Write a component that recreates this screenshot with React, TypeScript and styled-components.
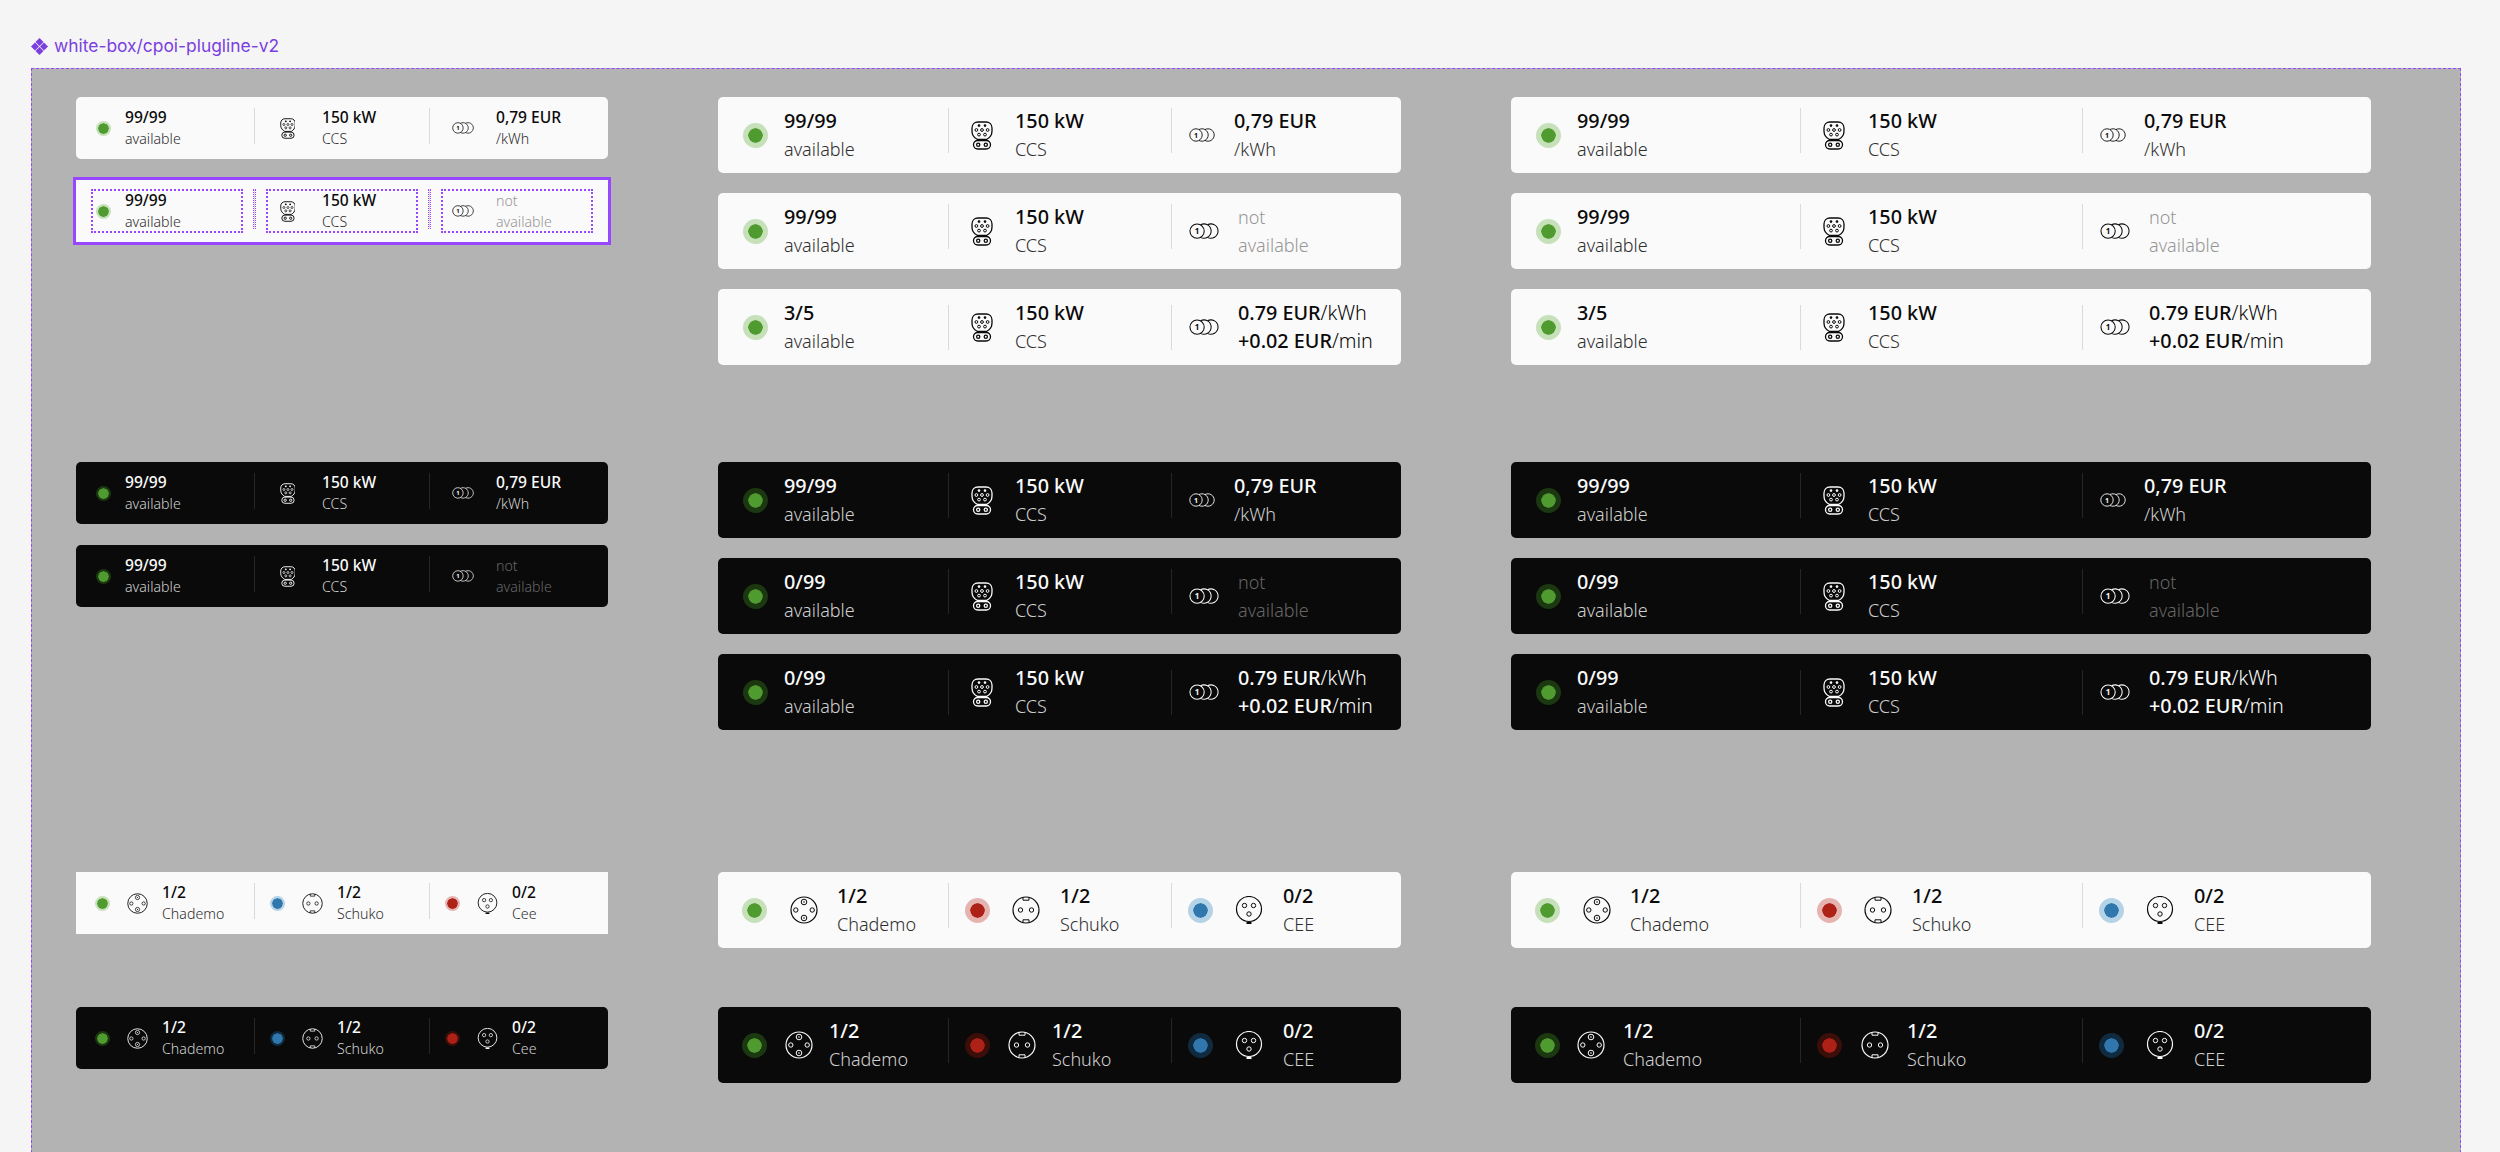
import React from "react";
import styled, { createGlobalStyle } from "styled-components";

const Global = createGlobalStyle`
  html, body { margin: 0; padding: 0; background: #f5f5f5; width: 2500px; height: 1152px; overflow: hidden; }
  body { font-family: "Noto Sans", "Open Sans", sans-serif; }
`;

type Size = "sm" | "md" | "xl";
type Tone = "green" | "red" | "blue";

const Page = styled.div`
  width: 2500px;
  height: 1152px;
  overflow: hidden;
  padding: 34px 0 0 31px;
  box-sizing: border-box;
`;
const FrameLabel = styled.div`
  display: flex;
  align-items: center;
  gap: 6px;
  height: 24px;
  margin-bottom: 10px;
  font: 400 17.4px/24px Inter, sans-serif;
  color: #7b3fe0;
`;
const Frame = styled.div`
  width: 2430px;
  height: 1100px;
  box-sizing: border-box;
  border: 1px dashed #9747ff;
  background: #b3b3b3;
  padding: 28px 0 0 44px;
  display: grid;
  grid-template-columns: 532px 683px 860px;
  column-gap: 110px;
  align-content: start;
`;
const Column = styled.div`
  display: flex;
  flex-direction: column;
`;
const Section = styled.div<{ $h: number; $gap: number }>`
  height: ${(p) => p.$h}px;
  display: flex;
  flex-direction: column;
  gap: ${(p) => p.$gap}px;
`;

const gridBySize: Record<Size, string> = {
  sm: "150px 1px 150px 1px 150px",
  md: "202px 1px 198px 1px 1fr",
  xl: "261px 1px 257px 1px 1fr",
};
const Row = styled.div<{ $size: Size; $dark?: boolean; $square?: boolean; $selected?: boolean }>`
  position: relative;
  display: grid;
  grid-template-columns: ${(p) => gridBySize[p.$size]};
  column-gap: 12px;
  align-items: center;
  padding: 0 16px;
  height: ${(p) => (p.$size === "sm" ? 62 : 76)}px;
  border-radius: ${(p) => (p.$square || p.$selected ? 0 : 5)}px;
  background: ${(p) => (p.$dark ? "#0a0a0a" : "#fafafa")};
  color: ${(p) => (p.$dark ? "#fafafa" : "#0a0a0a")};
  outline: ${(p) => (p.$selected ? "3px solid #9747ff" : "none")};
`;
const Cell = styled.div<{ $selected?: boolean }>`
  display: flex;
  align-items: center;
  min-width: 0;
  outline: ${(p) => (p.$selected ? "2px dotted #9747ff" : "none")};
  outline-offset: -1px;
`;
const Slot = styled.div<{ $w: number }>`
  flex: none;
  width: ${(p) => p.$w}px;
  display: flex;
  align-items: center;
  justify-content: center;
`;
const Divider = styled.div<{ $dark?: boolean; $top: number; $h: number; $selected?: boolean }>`
  align-self: start;
  width: 1px;
  height: ${(p) => p.$h}px;
  margin-top: ${(p) => p.$top}px;
  background: ${(p) => (p.$dark ? "#262626" : "#dadada")};
  ${(p) => (p.$selected ? "outline: 1.5px dotted #9747ff; outline-offset: -0.5px;" : "")}
`;

const toneColor: Record<Tone, { core: string; light: string; dark: string }> = {
  green: { core: "#4f9b2f", light: "#c6e0b9", dark: "#1b3811" },
  red: { core: "#ae2116", light: "#e6b4b0", dark: "#3c0e0a" },
  blue: { core: "#2f77ad", light: "#b4d3e6", dark: "#102b3f" },
};
const Dot = styled.div<{ $tone: Tone; $size: Size; $dark?: boolean }>`
  box-sizing: border-box;
  width: ${(p) => (p.$size === "sm" ? 15 : 25)}px;
  height: ${(p) => (p.$size === "sm" ? 15 : 25)}px;
  border-radius: 50%;
  border: ${(p) => (p.$size === "sm" ? 2.5 : 5)}px solid
    ${(p) => (p.$dark ? toneColor[p.$tone].dark : toneColor[p.$tone].light)};
  background: ${(p) => toneColor[p.$tone].core};
  background-clip: padding-box;
`;

const TextBlock = styled.div<{ $size: Size; $ml: number }>`
  margin-left: ${(p) => p.$ml}px;
  font-size: ${(p) => (p.$size === "sm" ? 14.2 : 18)}px;
  line-height: ${(p) => (p.$size === "sm" ? 21 : 28)}px;
  white-space: nowrap;
`;
const Line = styled.div`
  font-weight: 500;
  font-size: 1.1em;
`;
const Sub = styled.div<{ $dark?: boolean; $off?: boolean }>`
  font-weight: 300;
  color: ${(p) => (p.$off ? (p.$dark ? "#666666" : "#969696") : p.$dark ? "#d0d0d0" : "#2e2e2e")};
`;
const Unit = styled.span`
  font-weight: 300;
`;

const CcsIcon = ({ h }: { h: number }) => (
  <svg width={(h * 22) / 29} height={h} viewBox="0 0 22 29" fill="none" stroke="currentColor" strokeWidth="1.300">
    <path d="M7 1h8c3.500 0 6 2.500 6 6v3c0 4-2.500 7-5.500 8.500h-9C3.500 17 1 14 1 10V7c0-3.500 2.500-6 6-6z" />
    <rect x="2.500" y="19.500" width="17" height="8.500" rx="4.200" />
    <circle cx="7.200" cy="23.800" r="1.600" />
    <circle cx="14.800" cy="23.800" r="1.600" />
    <g stroke="none" fill="currentColor">
      <circle cx="8" cy="4.600" r="1.300" />
      <circle cx="14" cy="4.600" r="1.300" />
    </g>
    <g strokeWidth="1">
      <circle cx="5.400" cy="9" r="1.400" />
      <circle cx="11" cy="9" r="1.400" />
      <circle cx="16.600" cy="9" r="1.400" />
      <circle cx="8" cy="13.600" r="1.400" />
      <circle cx="14" cy="13.600" r="1.400" />
    </g>
  </svg>
);

const CoinIcon = ({ w }: { w: number }) => (
  <svg width={w} height={(w * 14) / 26} viewBox="0 0 26 14" fill="none" stroke="currentColor" strokeWidth="0.9">
    <circle cx="7" cy="7" r="6.200" />
    <path d="M10 1.570A6.200 6.200 0 1 1 10 12.430" />
    <path d="M16 1.570A6.200 6.200 0 1 1 16 12.430" />
    <text x="7" y="9.600" textAnchor="middle" fontSize="7" fontWeight="700" fill="currentColor" stroke="none">1</text>
  </svg>
);

const ChademoIcon = ({ s }: { s: number }) => (
  <svg width={s} height={s} viewBox="0 0 28 28" fill="none" stroke="currentColor" strokeWidth="1.200">
    <circle cx="14" cy="14" r="13" />
    <circle cx="14" cy="6" r="2.800" strokeWidth="1" />
    <circle cx="14" cy="22" r="2.800" strokeWidth="1" />
    <circle cx="14" cy="6" r="0.800" fill="currentColor" stroke="none" />
    <circle cx="14" cy="22" r="0.800" fill="currentColor" stroke="none" />
    <circle cx="5.800" cy="14" r="2.200" strokeWidth="1" />
    <circle cx="22.200" cy="14" r="2.200" strokeWidth="1" />
  </svg>
);

const SchukoIcon = ({ s }: { s: number }) => (
  <svg width={s} height={s} viewBox="0 0 28 28" fill="none" stroke="currentColor" strokeWidth="1.200">
    <circle cx="14" cy="14" r="13" />
    <path d="M11 1.400v2.800h6V1.400M11 26.600v-2.800h6v2.800" strokeWidth="1" />
    <circle cx="8.500" cy="14" r="2.200" strokeWidth="1" />
    <circle cx="19.500" cy="14" r="2.200" strokeWidth="1" />
  </svg>
);

const CeeIcon = ({ s }: { s: number }) => (
  <svg width={s} height={s} viewBox="0 0 28 28" fill="none" stroke="currentColor" strokeWidth="1.200">
    <circle cx="14" cy="13" r="12.500" />
    <path d="M11.500 26h5v2h-5z" fill="currentColor" stroke="none" />
    <circle cx="9.500" cy="9.500" r="2.200" strokeWidth="1" />
    <circle cx="18.500" cy="9.500" r="2.200" strokeWidth="1" />
    <circle cx="14" cy="18" r="2.200" strokeWidth="1" />
  </svg>
);

type Metric = [number, number];
type PlugLayout = { status: Metric; power: Metric; coin: Metric; coinAlt: Metric };
const plugLayouts: Record<Size, PlugLayout> = {
  sm: { status: [22, 11], power: [41, 14], coin: [42, 12], coinAlt: [42, 12] },
  md: { status: [42, 8], power: [42, 12], coin: [36, 14], coinAlt: [40, 14] },
  xl: { status: [42, 8], power: [42, 13], coin: [36, 13], coinAlt: [40, 14] },
};

type Tariff = "price" | "none" | "combo";

function PlugRow(props: {
  size: Size;
  dark?: boolean;
  selected?: boolean;
  count: string;
  tariff: Tariff;
}) {
  const { size, dark, selected, count, tariff } = props;
  const m = plugLayouts[size];
  const small = size === "sm";
  const coin = tariff === "price" || small ? m.coin : m.coinAlt;
  const coinW = small ? 22 : tariff === "price" ? 26 : 30;
  const top = selected ? 10 : tariff === "combo" ? 16 : 11;
  const h = small ? (selected ? 38 : 36) : 45;
  return (
    <Row $size={size} $dark={dark} $selected={selected}>
      <Cell $selected={selected}>
        <Slot $w={m.status[0]}>
          <Dot $tone="green" $size={size} $dark={dark} />
        </Slot>
        <TextBlock $size={size} $ml={m.status[1]}>
          <Line>{count}</Line>
          <Sub $dark={dark}>available</Sub>
        </TextBlock>
      </Cell>
      <Divider $dark={dark} $top={top} $h={h} $selected={selected} />
      <Cell $selected={selected}>
        <Slot $w={m.power[0]}>
          <CcsIcon h={small ? 21 : 29} />
        </Slot>
        <TextBlock $size={size} $ml={m.power[1]}>
          <Line>150 kW</Line>
          <Sub $dark={dark}>CCS</Sub>
        </TextBlock>
      </Cell>
      <Divider $dark={dark} $top={top} $h={h} $selected={selected} />
      <Cell $selected={selected}>
        <Slot $w={coin[0]}>
          <CoinIcon w={coinW} />
        </Slot>
        <TextBlock $size={size} $ml={coin[1]}>
          {tariff === "price" && (
            <>
              <Line>0,79 EUR</Line>
              <Sub $dark={dark}>/kWh</Sub>
            </>
          )}
          {tariff === "none" && (
            <>
              <Sub $dark={dark} $off>not</Sub>
              <Sub $dark={dark} $off>available</Sub>
            </>
          )}
          {tariff === "combo" && (
            <>
              <Line>0.79 EUR<Unit>/kWh</Unit></Line>
              <Line>+0.02 EUR<Unit>/min</Unit></Line>
            </>
          )}
        </TextBlock>
      </Cell>
    </Row>
  );
}

type ConnCell = {
  tone: Tone;
  icon: "chademo" | "schuko" | "cee";
  count: string;
  label: string;
  dotW: number;
  iconW: number;
  ml: number;
};

function ConnectorRow({ size, dark, square, cells }: { size: Size; dark?: boolean; square?: boolean; cells: ConnCell[] }) {
  const small = size === "sm";
  const s = small ? 21 : 28;
  const renderIcon = (c: ConnCell) =>
    c.icon === "chademo" ? <ChademoIcon s={s} /> : c.icon === "schuko" ? <SchukoIcon s={s} /> : <CeeIcon s={s} />;
  const h = small ? 36 : 45;
  return (
    <Row $size={size} $dark={dark} $square={square}>
      {cells.map((c, i) => (
        <React.Fragment key={c.icon}>
          {i > 0 && <Divider $dark={dark} $top={11} $h={h} />}
          <Cell>
            <Slot $w={c.dotW}>
              <Dot $tone={c.tone} $size={size} $dark={dark} />
            </Slot>
            <Slot $w={c.iconW}>{renderIcon(c)}</Slot>
            <TextBlock $size={size} $ml={c.ml}>
              <Line>{c.count}</Line>
              <Sub $dark={dark}>{c.label}</Sub>
            </TextBlock>
          </Cell>
        </React.Fragment>
      ))}
    </Row>
  );
}

const conn = (
  tones: [Tone, Tone, Tone],
  cee: string,
  m: [number, number, number][]
): ConnCell[] => [
  { tone: tones[0], icon: "chademo", count: "1/2", label: "Chademo", dotW: m[0][0], iconW: m[0][1], ml: m[0][2] },
  { tone: tones[1], icon: "schuko", count: "1/2", label: "Schuko", dotW: m[1][0], iconW: m[1][1], ml: m[1][2] },
  { tone: tones[2], icon: "cee", count: "0/2", label: cee, dotW: m[2][0], iconW: m[2][1], ml: m[2][2] },
];

const smallM: [number, number, number][] = [[20, 50, 0], [20, 50, 0], [20, 50, 0]];
const mdLight: [number, number, number][] = [[41, 58, 4], [32, 66, 1], [32, 66, 1]];
const mdDark: [number, number, number][] = [[41, 48, 6], [32, 58, 1], [32, 66, 1]];
const xlLight: [number, number, number][] = [[40, 60, 3], [32, 66, 1], [32, 66, 1]];
const xlDark: [number, number, number][] = [[40, 48, 8], [32, 60, 2], [32, 66, 1]];

function PlugGroup({ size, dark }: { size: "md" | "xl"; dark?: boolean }) {
  return (
    <Section $h={dark ? 410 : 365} $gap={20}>
      <PlugRow size={size} dark={dark} count="99/99" tariff="price" />
      <PlugRow size={size} dark={dark} count={dark ? "0/99" : "99/99"} tariff="none" />
      <PlugRow size={size} dark={dark} count={dark ? "0/99" : "3/5"} tariff="combo" />
    </Section>
  );
}

const Diamond = () => (
  <svg width="17" height="17" viewBox="0 0 17 17" fill="#7b3fe0">
    <path d="M8.500 0l4 4-4 4-4-4zM4 4.500l4 4-4 4-4-4zM13 4.500l4 4-4 4-4-4zM8.500 9l4 4-4 4-4-4z" />
  </svg>
);

export default function App() {
  return (
    <Page>
      <Global />
      <FrameLabel>
        <Diamond />
        white-box/cpoi-plugline-v2
      </FrameLabel>
      <Frame>
        <Column>
          <Section $h={365} $gap={21}>
            <PlugRow size="sm" count="99/99" tariff="price" />
            <PlugRow size="sm" selected count="99/99" tariff="none" />
          </Section>
          <Section $h={410} $gap={21}>
            <PlugRow size="sm" dark count="99/99" tariff="price" />
            <PlugRow size="sm" dark count="99/99" tariff="none" />
          </Section>
          <Section $h={260} $gap={73}>
            <ConnectorRow size="sm" square cells={conn(["green", "blue", "red"], "Cee", smallM)} />
            <ConnectorRow size="sm" dark cells={conn(["green", "blue", "red"], "Cee", smallM)} />
          </Section>
        </Column>
        <Column>
          <PlugGroup size="md" />
          <PlugGroup size="md" dark />
          <Section $h={260} $gap={59}>
            <ConnectorRow size="md" cells={conn(["green", "red", "blue"], "CEE", mdLight)} />
            <ConnectorRow size="md" dark cells={conn(["green", "red", "blue"], "CEE", mdDark)} />
          </Section>
        </Column>
        <Column>
          <PlugGroup size="xl" />
          <PlugGroup size="xl" dark />
          <Section $h={260} $gap={59}>
            <ConnectorRow size="xl" cells={conn(["green", "red", "blue"], "CEE", xlLight)} />
            <ConnectorRow size="xl" dark cells={conn(["green", "red", "blue"], "CEE", xlDark)} />
          </Section>
        </Column>
      </Frame>
    </Page>
  );
}
